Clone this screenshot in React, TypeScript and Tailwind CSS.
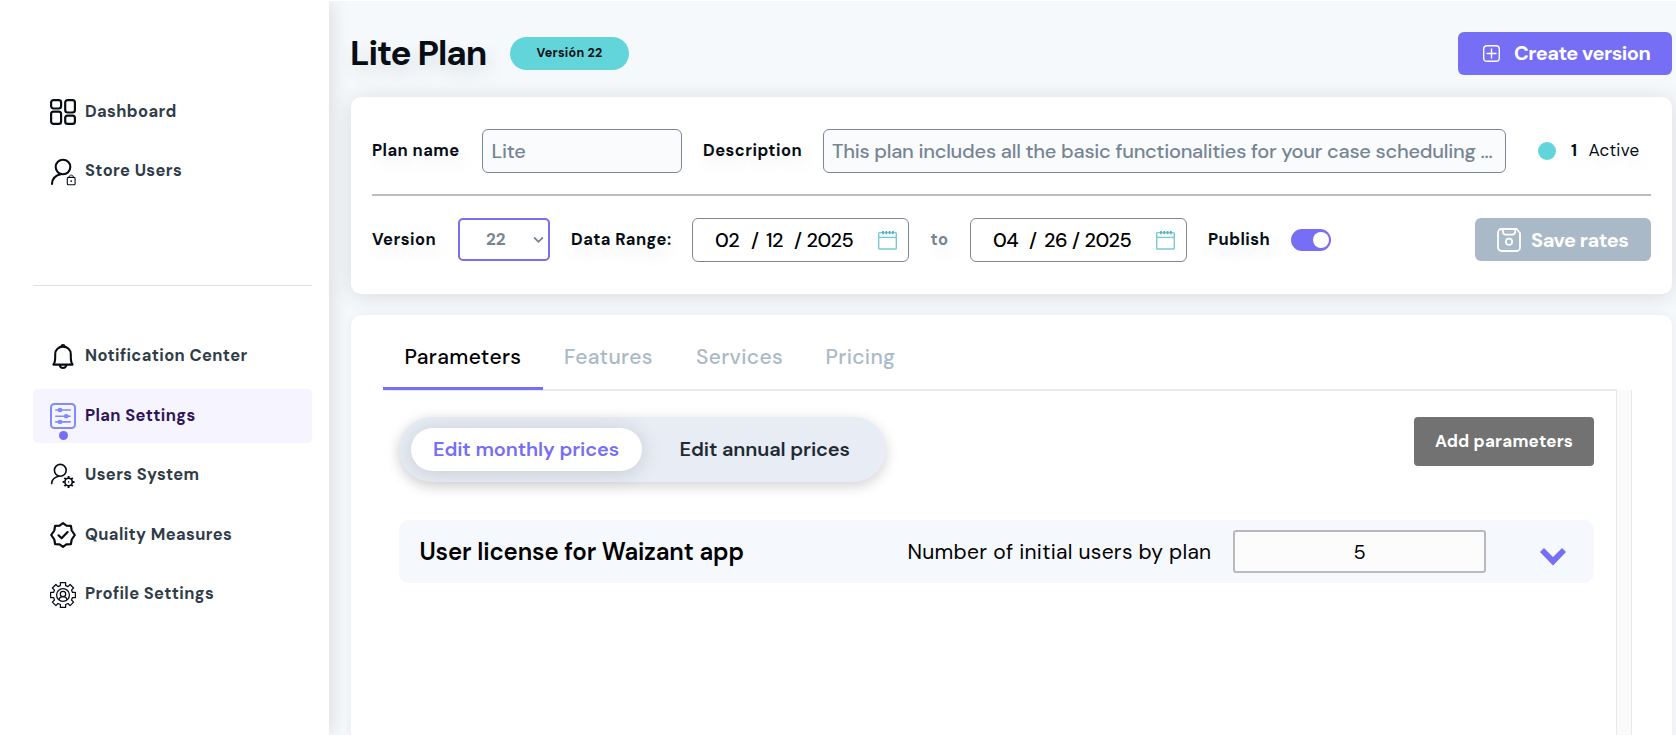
import React from "react";

const TEXT_SHADOW = "[text-shadow:4px_8px_18px_rgba(0,0,0,0.12)]";

function DashboardIcon() {
  return (
    <svg width="26" height="26" viewBox="0 0 26 26" fill="none" stroke="#060d14" strokeWidth="2.2">
      <rect x="1.1" y="1.1" width="10" height="8.4" rx="2.4" />
      <rect x="15.2" y="1.1" width="9.7" height="12.4" rx="2.4" />
      <rect x="1.1" y="12.7" width="10" height="12.2" rx="2.4" />
      <rect x="15.2" y="16.7" width="9.7" height="8.2" rx="2.4" />
    </svg>
  );
}

function StoreUsersIcon() {
  return (
    <svg width="26" height="28" viewBox="0 0 26 28" fill="none" stroke="#060d14" strokeLinecap="round">
      <circle cx="13" cy="9" r="7.3" strokeWidth="2.1" />
      <path d="M11 16.3C5.4 17.3 2.2 21 2 26" strokeWidth="2.1" />
      <rect x="17.3" y="19.4" width="7.8" height="7.4" rx="1" strokeWidth="1.1" />
      <path d="M19 19.2c0-3 4.4-3 4.4 0" strokeWidth="0.9" />
      <circle cx="21.2" cy="23.1" r="0.9" fill="#060d14" stroke="none" />
    </svg>
  );
}

function BellIcon() {
  return (
    <svg width="26" height="26" viewBox="0 0 26 26" fill="none" stroke="#060d14" strokeWidth="2.1" strokeLinejoin="round">
      <path d="M3.4 20.6C5 19 5.2 17.5 5.2 12.8V10.2C5.2 5.8 8.6 2.6 13 2.6s7.800 3.200 7.800 7.600v2.600c0 4.700.2 6.200 1.800 7.800Z" />
      <path d="M11.5 2.200c.2-1.500 2.800-1.500 3 0" />
      <path d="M9.800 21.200c.4 3.700 6 3.700 6.400 0" />
    </svg>
  );
}

function PlanIcon() {
  return (
    <svg width="26" height="26" viewBox="0 0 26 26" fill="none" stroke="#7f8bf7" strokeWidth="1.600" strokeLinecap="round">
      <rect x="1" y="1" width="24" height="24" rx="3.500" strokeWidth="2" />
      <path d="M5.800 7h14.400M5.800 13.200h14.400M5.800 18.900h14.400" />
      <g fill="#7f8bf7" stroke="none">
        <ellipse cx="10" cy="7" rx="2.400" ry="2.200" />
        <ellipse cx="16.200" cy="13.200" rx="2.400" ry="2.200" />
        <ellipse cx="10" cy="18.900" rx="2.400" ry="2.200" />
      </g>
    </svg>
  );
}

function UsersSystemIcon() {
  return (
    <svg width="26" height="26" viewBox="0 0 26 26" fill="none" stroke="#060d14" strokeLinecap="round">
      <circle cx="10.300" cy="7.300" r="5.900" strokeWidth="1.600" />
      <path d="M8.600 13.300C4 14.400 1.800 17.200 1.700 20.600" strokeWidth="1.600" />
      <circle cx="18.600" cy="19" r="3.700" strokeWidth="1.600" />
      <circle cx="18.600" cy="19" r="0.800" fill="#060d14" stroke="none" />
      <path
        d="M18.600 15v-1.900M18.600 24.900V23M22.600 19h1.900M12.700 19h1.900M21.400 16.200l1.400-1.400M14.400 23.200l1.400-1.400M21.400 21.800l1.400 1.400M14.400 14.800l1.400 1.400"
        strokeWidth="1.900"
        strokeLinecap="butt"
      />
    </svg>
  );
}

function QualityIcon() {
  return (
    <svg width="26" height="26" viewBox="0 0 26 26" fill="none" stroke="#060d14" strokeWidth="2.200" strokeLinejoin="round" strokeLinecap="round">
      <path d="M13 1.200 16.400 3.600 20.900 3.900 21.700 8.500 24.800 13 21.700 17.500 20.900 22.100 16.400 22.400 13 24.800 9.600 22.400 5.100 22.100 4.300 17.500 1.200 13 4.300 8.500 5.100 3.900 9.600 3.600Z" />
      <path d="m8.500 13.300 3.100 3 6-6.200" />
    </svg>
  );
}

function ProfileIcon() {
  return (
    <svg width="26" height="26" viewBox="0 0 26 26" fill="none" stroke="#060d14" strokeWidth="1.250" strokeLinejoin="round">
      <path d="M10.400.7h5.200v2.900l2.400 1 2.100-2.100 3.500 3.500-2.100 2.100 1 2.300h2.900v5.200h-2.900l-1 2.400 2.100 2.100-3.500 3.500-2.100-2.100-2.400 1v2.900h-5.200v-2.900l-2.400-1-2.100 2.100-3.500-3.500 2.100-2.100-1-2.400H.6v-5.200h2.900l1-2.300-2.100-2.100 3.500-3.500L8 4.600l2.400-1Z" />
      <circle cx="13" cy="13" r="6.400" />
      <circle cx="13" cy="12" r="2.700" />
      <path d="M9.200 17.800c.4-4.200 7.200-4.200 7.600 0" />
    </svg>
  );
}

function CalendarIcon() {
  return (
    <svg width="19" height="20" viewBox="0 0 19 20" fill="none" stroke="#7cc9d3" strokeWidth="1.400">
      <rect x="0.700" y="2.600" width="17.600" height="16.400" rx="0.800" />
      <path d="M0.700 7.400h17.600" />
      <path d="M5 4.300V1M8.300 4.300V1M11.600 4.300V1M14.800 4.300V1" stroke="#4fb3c0" strokeWidth="1.800" />
    </svg>
  );
}

function PlusIcon() {
  return (
    <svg width="17" height="17" viewBox="0 0 17 17" fill="none" stroke="#ffffff" strokeWidth="1.400" strokeLinecap="round">
      <rect x="0.700" y="0.700" width="15.600" height="15.600" rx="3.400" />
      <path d="M8.500 4v9M4 8.500h9" />
    </svg>
  );
}

function SaveIcon() {
  return (
    <svg width="24" height="24" viewBox="0 0 24 24" fill="none" stroke="#ffffff" strokeWidth="1.800">
      <path d="M4.500 1h15l3.500 4v14.500a3.500 3.500 0 0 1-3.500 3.500h-15A3.500 3.500 0 0 1 1 19.500v-15A3.500 3.500 0 0 1 4.500 1Z" />
      <path d="M5.800 1.200v1.600c0 2.600 1.200 3.800 3 3.800h6.400c1.800 0 3-1.200 3-3.800V1.200" />
      <circle cx="12" cy="13.800" r="3.100" />
    </svg>
  );
}

type NavProps = { icon: React.ReactNode; label: string; active?: boolean };

function NavItem({ icon, label, active }: NavProps) {
  return (
    <a className={`relative flex h-[54px] items-center rounded-[5px] pl-[17px] ${active ? "bg-[#f6f4fe] text-[#2d1658]" : "text-[#303c48]"}`}>
      <span className="flex w-[26px] shrink-0 justify-center">{icon}</span>
      <span className="ml-[9px] pb-[1px] text-[16.5px] leading-6 font-bold tracking-[0.38px]">{label}</span>
      {active && <span className="absolute bottom-[3px] left-[25.5px] size-[9px] rounded-full bg-[#766ef5]" />}
    </a>
  );
}

function Caption({ children, className = "" }: { children: React.ReactNode; className?: string }) {
  return (
    <span className={`shrink-0 text-[16.5px] leading-6 font-bold tracking-[0.46px] whitespace-nowrap ${TEXT_SHADOW} ${className}`}>
      {children}
    </span>
  );
}

function DateField({ month, day, year }: { month: string; day: string; year: string }) {
  return (
    <div className="flex h-11 w-[217px] shrink-0 items-center justify-between rounded-[6px] border border-[#7d8793] bg-white pr-[11px] pl-[22px] text-[20px] font-medium tracking-[-0.5px] text-black">
      <span className="flex">
        <span className="w-[36px]">{month}</span>
        <span className="w-[15px]">/</span>
        <span className="w-[28px]">{day}</span>
        <span className="w-[12.5px]">/</span>
        <span>{year}</span>
      </span>
      <CalendarIcon />
    </div>
  );
}

export default function App() {
  return (
    <div className="h-[748px] w-[1676px] overflow-hidden bg-white pt-px font-['DM_Sans',Inter,sans-serif] text-[#060d14]">
      <div className="flex h-[734px] overflow-hidden bg-[#f5f9fc]">
        <aside className="z-10 flex w-[329px] shrink-0 flex-col bg-white pt-[84px] pr-[17px] pl-[33px] shadow-[0_0_22px_rgba(0,0,0,0.14)]">
          <nav className="flex flex-col gap-[5.5px]">
            <NavItem icon={<DashboardIcon />} label="Dashboard" />
            <NavItem icon={<StoreUsersIcon />} label="Store Users" />
          </nav>
          <div className="mt-[86.5px] h-px shrink-0 bg-[#d9e2e8]" />
          <nav className="mt-[43.5px] flex flex-col gap-[5.5px]">
            <NavItem icon={<BellIcon />} label="Notification Center" />
            <NavItem icon={<PlanIcon />} label="Plan Settings" active />
            <NavItem icon={<UsersSystemIcon />} label="Users System" />
            <NavItem icon={<QualityIcon />} label="Quality Measures" />
            <NavItem icon={<ProfileIcon />} label="Profile Settings" />
          </nav>
        </aside>

        <main className="flex w-[1347px] flex-col pr-1 pl-[22px]">
          <header className="flex h-24 shrink-0 items-center pt-[9px]">
            <h1 className="-ml-px w-[160px] pb-[2px] text-[35px] leading-[44px] font-bold tracking-[-1.1px] whitespace-nowrap [text-shadow:4px_8px_18px_rgba(0,0,0,0.12)]">
              Lite Plan
            </h1>
            <span className="flex h-[33px] w-[119px] items-center justify-center rounded-full bg-[#62d5da] text-[12.5px] font-bold tracking-[0.25px]">
              Versión 22
            </span>
            <button className="ml-auto flex h-[43px] w-[214px] items-center rounded-[6px] bg-[#766ef5] pl-[25px] text-[20px] font-bold tracking-[-0.5px] whitespace-nowrap text-white">
              <PlusIcon />
              <span className="ml-[14px] pb-[2px]">Create version</span>
            </button>
          </header>

          <section className="h-[197px] shrink-0 rounded-[10px] bg-white px-[21px] pt-8 shadow-[0_2px_22px_rgba(0,0,0,0.12)]">
            <div className="flex h-11 items-center">
              <Caption className="w-[109.5px]">Plan name</Caption>
              <div className="flex h-11 w-[200.5px] shrink-0 items-center rounded-[6px] border border-[#7d8793] bg-[#f9fbfd] pl-[9px] text-[20px] font-medium tracking-[-0.25px] text-[#778493]">
                Lite
              </div>
              <Caption className="ml-[21px] w-[120px]">Description</Caption>
              <div className="flex h-11 w-[683px] shrink-0 items-center rounded-[6px] border border-[#7d8793] bg-[#f9fbfd] pl-[8px] text-[20px] font-medium tracking-[-0.25px] whitespace-nowrap text-[#778493]">
                This plan includes all the basic functionalities for your case scheduling ...
              </div>
              <span className="ml-8 size-[18px] shrink-0 rounded-full bg-[#62d5da]" />
              <Caption className="ml-[15px]">1</Caption>
              <span className="ml-[11px] text-[17px] tracking-[0.3px] [text-shadow:4px_8px_18px_rgba(0,0,0,0.12)]">Active</span>
            </div>
            <div className="mt-[21px] h-[2px] bg-[#bdbdbd]" />
            <div className="mt-[22px] flex h-11 items-center">
              <Caption className="w-[86px] pb-[1px]">Version</Caption>
              <div className="flex h-[43px] w-[92px] shrink-0 items-center justify-between self-start rounded-[5px] border-2 border-[#766ef5] bg-white pr-[4px] pl-[26px] text-[17px] font-bold text-[#778493]">
                22
                <svg width="11" height="8" viewBox="0 0 11 8" fill="none" stroke="#778493" strokeWidth="1.8">
                  <path d="m1.2 1.5 4.3 4.3 4.3-4.3" />
                </svg>
              </div>
              <Caption className="ml-[21px] w-[121px] pb-[1px]">Data Range:</Caption>
              <DateField month="02" day="12" year="2025" />
              <Caption className="w-[61px] pb-[1px] text-center text-[#778493]">to</Caption>
              <DateField month="04" day="26" year="2025" />
              <Caption className="ml-[21px] w-[83px] pb-[1px]">Publish</Caption>
              <span className="flex h-[22px] w-10 items-center justify-end rounded-full bg-[#766ef5] pr-[2.5px]">
                <span className="size-4 rounded-full bg-white" />
              </span>
              <button className="ml-auto flex h-[43px] w-[176px] items-center self-start rounded-[6px] bg-[#aab9c7] pl-[22px] text-[20px] font-bold tracking-[-0.45px] whitespace-nowrap text-white">
                <SaveIcon />
                <span className="ml-[10px]">Save rates</span>
              </button>
            </div>
          </section>

          <section className="mt-[21px] flex h-[440px] shrink-0 flex-col rounded-[10px] bg-white pl-8 shadow-[0_0_8px_rgba(0,0,0,0.06)]">
            <div className="flex h-[76px] w-[1234px] shrink-0 border-b-2 border-[#e4eaee] text-[21px] font-medium tracking-[0.35px] text-[#aab9c7]">
              <span className="-mb-px flex w-[160px] justify-center border-b-[3px] border-[#766ef5] pt-[26px] leading-8 text-black">
                Parameters
              </span>
              <span className="w-[131px] pt-[26px] pl-[21px] leading-8">Features</span>
              <span className="w-[129px] pt-[26px] pl-[22px] leading-8">Services</span>
              <span className="pt-[26px] pl-[22.5px] leading-8">Pricing</span>
            </div>
            <div className="flex h-[364px]">
              <div className="flex w-[1233px] flex-col pt-[26px] pr-[22px] pl-[15.5px]">
                <div className="flex items-start justify-between">
                  <div className="flex h-[65px] w-[487px] items-center rounded-full bg-[#e7ecf5] pl-[12px] text-[20px] font-semibold tracking-[-0.12px] shadow-[0_4px_14px_rgba(0,0,0,0.18)]">
                    <span className="flex h-[43px] w-[231px] items-center justify-center rounded-full bg-white pb-[2px] text-[#766ef5] shadow-[0_2px_22px_rgba(0,0,0,0.14)]">
                      Edit monthly prices
                    </span>
                    <span className="ml-[38px] pb-[2px] text-[#1f2a33]">Edit annual prices</span>
                  </div>
                  <button className="h-[49px] w-[180px] rounded-[4px] bg-[#727272] text-[17px] font-bold tracking-[0.2px] text-white">
                    Add parameters
                  </button>
                </div>
                <div className="mt-[38px] flex h-[63px] items-center rounded-[10px] bg-[#f5f8fc] pl-[21px] text-black">
                  <span className="w-[488px] text-[24px] font-semibold tracking-[-0.13px]">User license for Waizant app</span>
                  <span className="w-[325.5px] pt-[2px] text-[21px] tracking-[0.28px] whitespace-nowrap">Number of initial users by plan</span>
                  <div className="flex h-[43px] w-[253px] items-center justify-center rounded-[3px] border-2 border-[#b9b9b9] bg-[#fcfcfc] text-[20px]">
                    5
                  </div>
                  <svg className="mt-[10px] ml-[54px]" width="26" height="18" viewBox="0 0 26 18" fill="#766ef5">
                    <path d="M0 4 4 0l9 9 9-9 4 4-13 13.500Z" />
                  </svg>
                </div>
              </div>
              <div className="-mt-px w-4 border-x border-[#e8e8e8] bg-[#fafafa]" />
            </div>
          </section>
        </main>
      </div>
    </div>
  );
}
